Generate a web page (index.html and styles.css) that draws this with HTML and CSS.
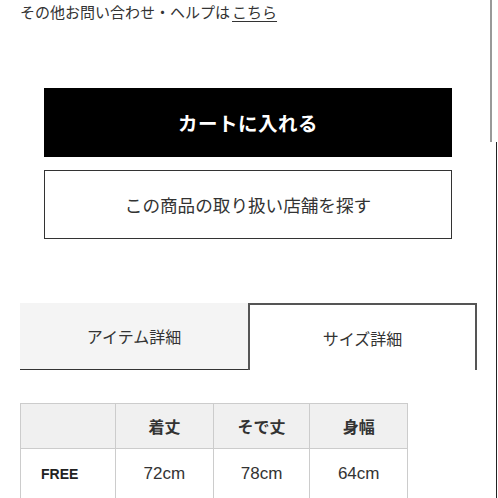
FILE: index.html
```html
<!DOCTYPE html>
<html lang="ja">
<head>
<meta charset="utf-8">
<link rel="stylesheet" href="styles.css">
</head>
<body>
<div class="page">
  <p class="help">その他お問い合わせ・ヘルプは<a class="help-link" href="#">こちら</a></p>
  <div class="actions">
    <button class="btn btn-cart">カートに入れる</button>
    <button class="btn btn-store">この商品の取り扱い店舗を探す</button>
  </div>
  <div class="tabs">
    <div class="tab tab-off">アイテム詳細</div>
    <div class="tab tab-on">サイズ詳細</div>
  </div>
  <table class="size-table">
    <tr class="head">
      <th class="c1"></th>
      <th class="c2">着丈</th>
      <th class="c3">そで丈</th>
      <th class="c4">身幅</th>
    </tr>
    <tr class="row">
      <td class="label">FREE</td>
      <td>72cm</td>
      <td>78cm</td>
      <td>64cm</td>
    </tr>
  </table>
</div>
<div class="bar-gray"></div>
<div class="bar-dark"></div>
</body>
</html>
```
FILE: styles.css
```css
html, body {
  margin: 0;
  padding: 0;
  background: #fff;
}
body {
  font-family: "Noto Sans CJK JP", "Noto Sans", sans-serif;
  color: #333;
  width: 498px;
  height: 498px;
  overflow: hidden;
  position: relative;
}
.page {
  display: flex;
  flex-direction: column;
}
.help {
  margin: 0;
  padding: 1px 0 0 20px;
  font-size: 15px;
  line-height: 22px;
  height: 23px;
  color: #333;
}
.help-link {
  color: #333;
  text-decoration: underline;
  text-underline-offset: 3px;
  margin-left: 2px;
}
.actions {
  display: flex;
  flex-direction: column;
  gap: 13px;
  margin: 64px 0 0 44px;
  width: 408px;
}
.btn {
  font-family: "Noto Sans CJK JP", sans-serif;
  height: 69px;
  width: 408px;
  margin: 0;
  padding: 0;
  cursor: pointer;
}
.btn-cart {
  background: #000;
  color: #fff;
  border: none;
  font-size: 19.5px;
  font-weight: 700;
  letter-spacing: 0.5px;
}
.btn-store {
  background: #fff;
  color: #333;
  border: 1.5px solid #333;
  font-size: 17.6px;
  font-weight: 400;
}
.tabs {
  display: flex;
  margin: 64px 0 0 20px;
  width: 457px;
  height: 67px;
}
.tab {
  flex: 0 0 auto;
  display: flex;
  align-items: center;
  justify-content: center;
  font-size: 16px;
  color: #333;
  box-sizing: border-box;
}
.tab-off {
  width: 228px;
  background: #f4f4f4;
  border-bottom: 1.5px solid #333;
}
.tab-on {
  width: 229px;
  background: #fff;
  border: 2px solid #555;
  border-bottom: none;
}
.size-table {
  margin: 33px 0 0 20px;
  border-collapse: collapse;
  width: 388px;
  font-family: "Liberation Sans", "Noto Sans CJK JP", sans-serif;
}
.size-table th, .size-table td {
  border: 1.5px solid #ccc;
  text-align: center;
  padding: 0;
}
.head th {
  height: 44px;
  background: #f0f0f0;
  font-family: "Noto Sans CJK JP", sans-serif;
  font-size: 16px;
  font-weight: 700;
  color: #333;
}
.c1 { width: 95px; }
.c2 { width: 98px; }
.c3 { width: 97px; }
.c4 { width: 98px; }
.row td {
  height: 49px;
  font-size: 17px;
  color: #333;
}
.row td.label {
  text-align: left;
  padding-left: 20px;
  font-size: 14px;
  font-weight: 700;
  color: #222;
}
.bar-gray {
  position: absolute;
  left: 490px;
  top: 0;
  width: 2px;
  height: 142px;
  background: #999;
}
.bar-dark {
  position: absolute;
  left: 496px;
  top: 142px;
  width: 1px;
  height: 356px;
  background: #222;
}
```
